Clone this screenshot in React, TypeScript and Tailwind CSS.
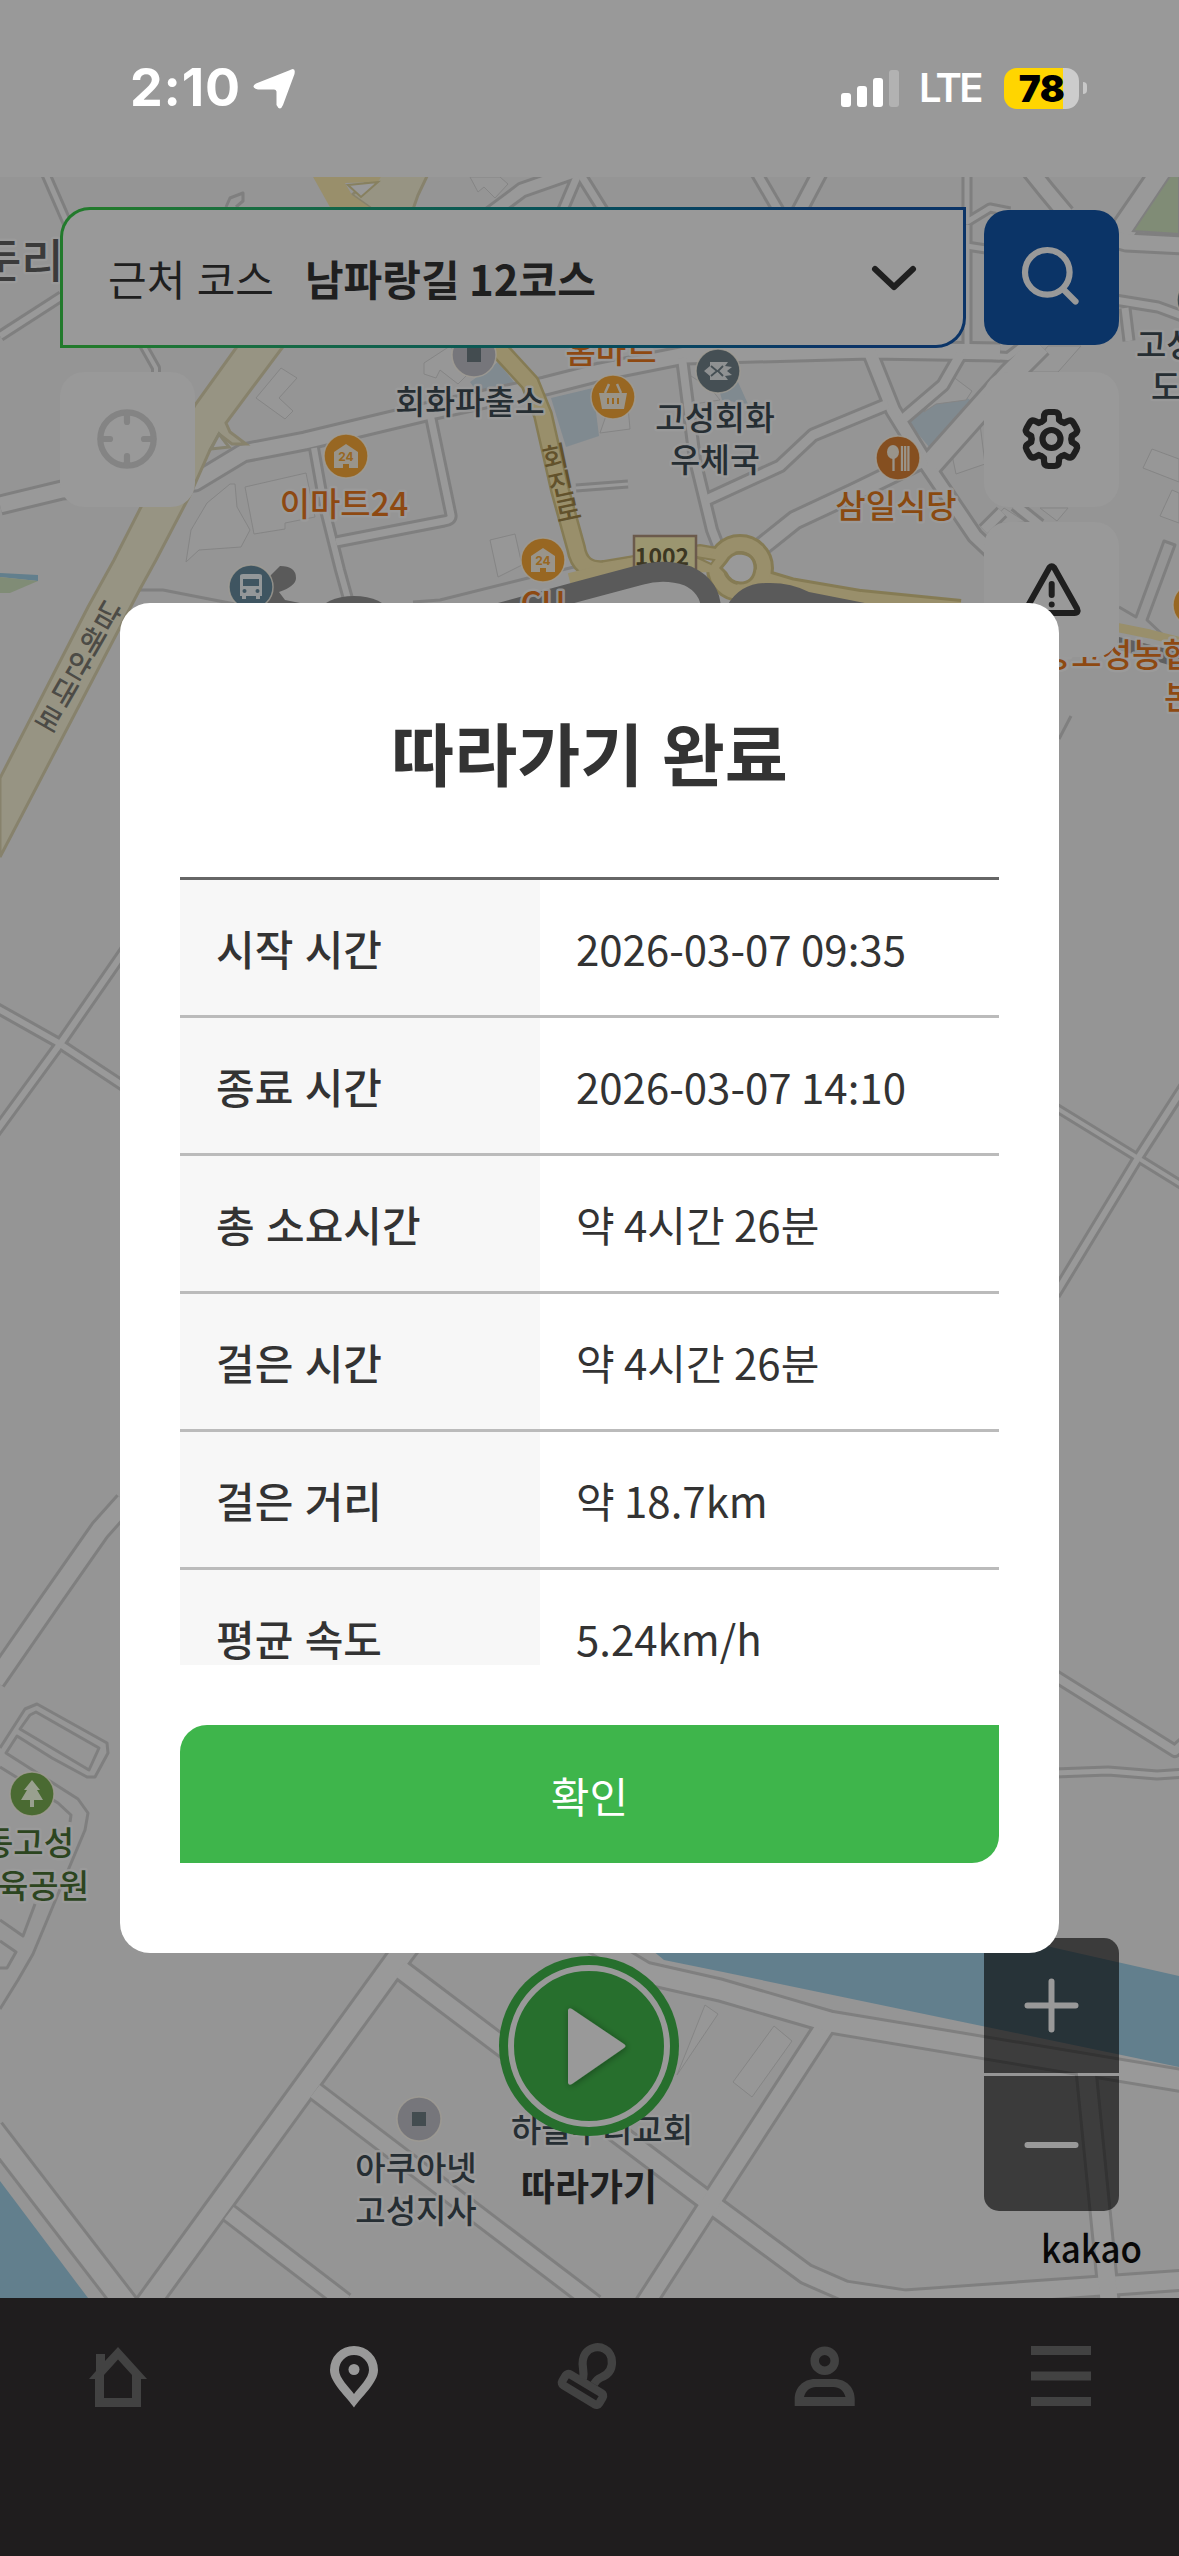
import { useState } from "react";
import type { ReactNode } from "react";

type Road = { d: string; w: number };

const summary = [
  { label: "시작 시간", value: "2026-03-07 09:35" },
  { label: "종료 시간", value: "2026-03-07 14:10" },
  { label: "총 소요시간", value: "약 4시간 26분" },
  { label: "걸은 시간", value: "약 4시간 26분" },
  { label: "걸은 거리", value: "약 18.7km" },
  { label: "평균 속도", value: "5.24km/h" },
];

const roads: Road[] = [
  { d: "M44 170L68 225", w: 8 },
  { d: "M0 336L62 296", w: 9 },
  { d: "M143 345L156 368V380", w: 7 },
  { d: "M490 214L522 190L585 168", w: 14 },
  { d: "M579 172L562 212", w: 10 },
  { d: "M579 172L604 212", w: 10 },
  { d: "M756 172L784 220", w: 11 },
  { d: "M820 172L792 225", w: 15 },
  { d: "M967 170V222L990 208L1010 212", w: 8 },
  { d: "M967 225V350", w: 8 },
  { d: "M960 245L986 249", w: 8 },
  { d: "M1030 170L1046 190L1066 214", w: 17 },
  { d: "M1166 168L1118 238", w: 26 },
  { d: "M1112 238L1126 242L1185 245", w: 18 },
  { d: "M1115 300L1158 307L1185 317", w: 10 },
  { d: "M1125 308L1129 341", w: 10 },
  { d: "M960 354L1008 357L1030 340", w: 9 },
  { d: "M1040 345L1010 375L930 465", w: 24 },
  { d: "M0 505L62 490L195 482L243 453L305 441L430 411L545 386L600 372L685 355L870 350L1000 352", w: 18 },
  { d: "M682 358L695 460L712 530L722 556", w: 11 },
  { d: "M869 350L893 410L925 462L975 536L992 552", w: 15 },
  { d: "M962 352L943 385L902 420", w: 12 },
  { d: "M888 404L813 435L780 466L706 500", w: 12 },
  { d: "M750 556L795 520L855 492L925 458", w: 18 },
  { d: "M576 488L628 484", w: 6 },
  { d: "M314 448L325 510L340 570L350 606", w: 9 },
  { d: "M430 414L451 515Q452 520 444 521L336 542", w: 10 },
  { d: "M984 530L1002 512", w: 12 },
  { d: "M1015 505L1040 525", w: 11 },
  { d: "M-5 1007L57 1042L125 1087", w: 9 },
  { d: "M125 950L60 1044L-5 1133", w: 9 },
  { d: "M125 1502L100 1530L51 1600L-5 1681", w: 20 },
  { d: "M1055 1107L1138 1158L1185 1187", w: 7 },
  { d: "M1055 1295L1138 1158L1185 1085", w: 9 },
  { d: "M1055 1676L1175 1751L1185 1742", w: 11 },
  { d: "M1055 1773L1108 1771L1157 1775L1185 1773", w: 8 },
  { d: "M-8 2130L129 2308", w: 24 },
  { d: "M146 2306L402 1953L412 1940", w: 24 },
  { d: "M229 2213L345 2302", w: 18 },
  { d: "M315 2091L595 2304", w: 18 },
  { d: "M400 1969L710 2203L806 2274L845 2291L905 2300L1185 2280", w: 20 },
  { d: "M829 2020L716 2194L645 2304", w: 20 },
  { d: "M1086 2070L1110 2310", w: 20 },
  { d: "M590 1940L645 1973L720 1990L830 2022L1190 2082", w: 22 },
];

const buildings = [
  "281,368 297,378 279,398 293,411 285,419 256,398",
  "245,487 306,473 315,517 285,523 285,529 254,534",
  "230,484 235,484 237,507 250,530 241,547 199,550 186,562 191,530 207,503",
  "490,540 515,534 522,565 498,577",
  "424,363 450,346 470,372 458,384 440,370 436,378 424,374",
  "470,177 478,192 484,187 495,198 508,184 500,177",
  "952,376 972,391 966,400 936,404 924,412",
  "980,424 952,455 956,474 985,464",
  "1152,449 1179,459 1179,482 1143,468",
  "1172,490 1179,493 1179,523 1160,516",
  "1026,372 1048,346 1081,346 1058,372",
  "990,524 1004,508 1026,522",
  "1040,508 1057,521 1068,508",
  "705,2005 718,2014 677,2075",
  "774,2026 792,2041 752,2097 733,2082",
  "688,374 712,390 720,400 694,404",
  "608,410 628,407 630,429 600,433",
];

function MapText({ x, y, color = "#262e33", anchor = "middle", size = 33, rotate = 0, children }: { x: number; y: number; color?: string; anchor?: "start" | "middle" | "end"; size?: number; rotate?: number; children: ReactNode }) {
  return (
    <text
      x={x}
      y={y}
      fill={color}
      fontSize={size}
      textAnchor={anchor}
      transform={rotate ? `rotate(${rotate} ${x} ${y})` : undefined}
      className="font-medium [paint-order:stroke]"
      stroke="#9b9b9b"
      strokeOpacity={rotate ? 0 : 0.85}
      strokeWidth={5}
      strokeLinejoin="round"
    >
      {children}
    </text>
  );
}

function Pin({ x, y, color, children }: { x: number; y: number; color: string; children?: ReactNode }) {
  return (
    <g transform={`translate(${x} ${y})`}>
      <circle r="22" fill={color} stroke="#a09c94" strokeOpacity="0.8" strokeWidth="1.5" />
      {children}
    </g>
  );
}

function Store24() {
  return (
    <>
      <path d="M0 -12L12 -4V12H3V8H-3V12H-12V-4Z" fill="#99948a" />
      <text y="4.5" textAnchor="middle" fontSize="12" fill="#986722" className="font-[Inter] font-bold">24</text>
    </>
  );
}

function CourseMap() {
  return (
    <svg className="absolute inset-0 h-full w-full" viewBox="0 177 1179 2121">
      <rect y="177" width="1179" height="2121" fill="#959595" />
      {/* water and green areas */}
      <path d="M0 2181L88 2298H0Z" fill="#627f8d" />
      <path d="M640 1940H1020L1179 1976V2067L723 1972L664 1960Z" fill="#627f8d" />
      <path d="M0 573L38 575V581L0 577Z" fill="#627f8d" />
      <path d="M0 577L38 581L10 593H0Z" fill="#808c76" />
      <path d="M470 382L498 362L522 392L478 393ZM551 398L593 388L599 436L566 447ZM949 387L975 403L939 448H930L908 422L924 407ZM716 378L738 382L748 404L722 400Z" fill="#808a90" />

      {buildings.map((p) => (
        <polygon key={p} points={p} fill="#979797" stroke="#858585" strokeWidth="1" />
      ))}

      <g fill="none" stroke="#7f7f7f" strokeLinejoin="round">
        {roads.map((r) => (
          <path key={r.d} d={r.d} strokeWidth={r.w + 3} />
        ))}
      </g>
      <g fill="none" stroke="#999999" strokeLinejoin="round">
        {roads.map((r) => (
          <path key={r.d} d={r.d} strokeWidth={r.w - 3} />
        ))}
      </g>
      <path d="M1179 170V234L1133 231L1174 170Z" fill="#808c76" stroke="#7f7f7f" strokeWidth="2" />

      <g fill="none" stroke="#7f7f7f" strokeWidth="3" strokeLinejoin="round">
        <path d="M0 1748L25 1709L37 1704L107 1743L108 1753L95 1777H87L52 1758L17 1736L6 1753L78 1799L88 1813L85 1830L53 1906L33 1954L18 1980L0 2009" fill="#999999" fillOpacity="0.4" />
        <path d="M20 1729L30 1715L36 1712L99 1748L89 1770Z" fill="#959595" />
        <path d="M0 1767L58 1803L71 1815L70 1822M35 1904L23 1936L0 1920M0 1941L16 1952L7 1968H0" />
        <path d="M1119 607L1136 617L1164 541L1175 545L1147 620L1163 635" />
        <path d="M138 590H163L214 600L235 604M413 602L440 600L528 578L574 567" />
        <path d="M1059 739L1071 716M226 207L230 198L243 193V201L236 207" />
      </g>

      {/* national road */}
      <path d="M380 170H430L418 195L411 215L282 348L226 423L230 432L246 444H232L219 434L210 450L190 495L156 560L140 589L0 857V778L88 607L114 560L141 507L195 405L236 348L369 207L352 195Z" fill="#979483" stroke="#87826c" strokeWidth="3" />
      <path d="M219 434L229 447L211 449Z" fill="#999999" stroke="#85826f" strokeWidth="3" />
      <path d="M312 175H382L378 182L345 183L352 195L372 209H331Z" fill="#998f6b" />
      <path d="M348 185L378 182L361 197Z" fill="#999999" stroke="#87805f" strokeWidth="2" />

      {/* local road 1002 and the roundabout */}
      <g fill="none" strokeLinejoin="round">
        <path d="M495 345L530 383L543 415L560 490L576 548Q580 572 604 570L700 554L735 560" stroke="#857b54" strokeWidth="20" />
        <path d="M740 575L790 590L860 602L960 612" stroke="#857b54" strokeWidth="26" />
        <circle cx="740" cy="568" r="24" stroke="#857b54" strokeWidth="20" />
        <path d="M495 345L530 383L543 415L560 490L576 548Q580 572 604 570L700 554L735 560" stroke="#998f6b" strokeWidth="15" />
        <path d="M570 582L640 565L715 563" stroke="#998f6b" strokeWidth="18" />
        <path d="M740 575L790 590L860 602L960 612" stroke="#998f6b" strokeWidth="20" />
        <circle cx="740" cy="568" r="24" stroke="#998f6b" strokeWidth="14" />
        <path d="M1115 627L1150 634L1185 643" stroke="#998f6b" strokeWidth="9" />
      </g>
      <path d="M721 568L726 562Q731 553 740 553Q755 554 755 568Q754 583 740 583Q730 582 726 573Z" fill="#999999" stroke="#857b54" strokeWidth="3" />
      <path d="M696 557L714 560L711 564Z" fill="#999999" stroke="#857b54" strokeWidth="2" />

      <rect x="634" y="536" width="62" height="40" fill="#9b9670" stroke="#6b5a4c" strokeWidth="2.5" />
      <text x="662" y="565" textAnchor="middle" fontSize="23" fill="#3c3722" className="font-bold">1002</text>

      {/* recorded track */}
      <path d="M470 621L580 591L640 575Q665 568 688 576Q711 587 711 610" fill="none" stroke="#5a5a5a" strokeWidth="20" />
      <path d="M727 606Q740 583 766 583Q790 582 809 592L880 606Z" fill="#5a5a5a" />
      <path d="M262 584L280 566Q296 566 296 578Q296 586 279 592L285 600L305 604H262Z" fill="#5a5a5a" />
      <ellipse cx="354" cy="612" rx="34" ry="16" fill="#5a5a5a" />
      <path d="M1119 637L1179 652V668L1119 650Z" fill="#5f5f5f" />

      <MapText x={-21} y={277} anchor="start" size={46} color="#3b3b3b">둔리</MapText>
      <MapText x={102} y={624} size={28} rotate={30} color="#4c4b46">남</MapText>
      <MapText x={87} y={650} size={28} rotate={30} color="#4c4b46">해</MapText>
      <MapText x={73} y={675} size={28} rotate={30} color="#4c4b46">안</MapText>
      <MapText x={59} y={701} size={28} rotate={30} color="#4c4b46">대</MapText>
      <MapText x={44} y={728} size={28} rotate={30} color="#4c4b46">로</MapText>
      <MapText x={557} y={467} size={28} rotate={-12} color="#62522c">회</MapText>
      <MapText x={563} y={494} size={28} rotate={-12} color="#62522c">진</MapText>
      <MapText x={570} y={520} size={28} rotate={-12} color="#62522c">로</MapText>

      <Pin x={474} y={355} color="#76767b"><rect x="-7" y="-7" width="14" height="14" fill="#434c50" /></Pin>
      <MapText x={470} y={414} size={32.5}>회화파출소</MapText>
      <Pin x={346} y={456} color="#986722"><Store24 /></Pin>
      <MapText x={344} y={516} color="#8e4912">이마트24</MapText>
      <Pin x={543} y={560} color="#986722"><Store24 /></Pin>
      <MapText x={543} y={615} color="#8e4912">CU</MapText>
      <MapText x={611} y={363} color="#8e4912">홈마트</MapText>
      <Pin x={613} y={397} color="#986722">
        <path d="M-14 -4H14L11 12H-11Z" fill="#99948a" />
        <path d="M-8 -4L-4 -13M8 -4L4 -13" stroke="#99948a" strokeWidth="2.5" />
        <path d="M-5 1V7M0 1V7M5 1V7" stroke="#986722" strokeWidth="2" />
      </Pin>
      <Pin x={718} y={371} color="#454f54">
        <path d="M-14 0L-8 -5V-9H10L7 -5L14 -4L9 0L14 4L7 5L10 9H-8V5Z" fill="#8f9192" />
        <path d="M-7 -5L-1 0L-7 5M5 -5L0 0L5 5" fill="none" stroke="#454f54" strokeWidth="1.8" />
      </Pin>
      <MapText x={715} y={430} size={32.5}>고성회화</MapText>
      <MapText x={715} y={472} size={32.5}>우체국</MapText>
      <Pin x={898} y={458} color="#854f20">
        <ellipse cx="-5" cy="-6" rx="6" ry="7" fill="#99948a" />
        <path d="M-4.5 -2V13M4 -12V13M7.2 -12V13M10.4 -12V13" stroke="#99948a" strokeWidth="2.3" />
      </Pin>
      <MapText x={896} y={518} color="#8a4a10">삼일식당</MapText>
      <Pin x={251} y={587} color="#3f5561">
        <path d="M-11 -11Q-11 -13 -8 -13H8Q11 -13 11 -11V9H9V12H5V9H-5V12H-9V9H-11Z" fill="#939799" />
        <path d="M-8 -8H8V-1H-8Z" fill="#3f5561" />
        <circle cx="-6.5" cy="4" r="2" fill="#3f5561" />
        <circle cx="6.5" cy="4" r="2" fill="#3f5561" />
      </Pin>
      <Pin x={1199} y={300} color="#454f54" />
      <Pin x={1195} y={605} color="#986722" />
      <MapText x={1136} y={357} anchor="start">고성</MapText>
      <MapText x={1151} y={399} anchor="start">도</MapText>
      <MapText x={1041} y={667} anchor="start" color="#8e4912">동고성농협</MapText>
      <MapText x={1164} y={709} anchor="start" color="#8e4912">본점</MapText>

      <Pin x={32} y={1794} color="#4a6a32">
        <path d="M0 -14L8 -4H5L11 6H2V13H-2V6H-11L-5 -4H-8Z" fill="#99a08f" />
      </Pin>
      <MapText x={74} y={1855} anchor="end" color="#2c451f">동고성</MapText>
      <MapText x={89} y={1898} anchor="end" color="#2c451f">체육공원</MapText>
      <Pin x={419} y={2119} color="#76767b"><rect x="-7" y="-7" width="14" height="14" fill="#434c50" /></Pin>
      <MapText x={416} y={2180}>아쿠아넷</MapText>
      <MapText x={416} y={2223}>고성지사</MapText>
      <MapText x={602} y={2142}>하늘우리교회</MapText>
      <text x="1041" y="2263" fontSize="38" textLength="101" lengthAdjust="spacingAndGlyphs" fill="#080808" className="font-['Noto_Sans_CJK_KR','Noto_Sans',sans-serif] font-medium">kakao</text>
    </svg>
  );
}

function StatusBar() {
  return (
    <header className="flex h-[177px] shrink-0 items-start justify-between bg-[#999999] pr-[92px] pl-[130px] pt-[66px] text-white">
      <div className="flex h-11 items-center gap-[11px]">
        <span className="font-[Inter] text-[52px] leading-none font-bold tracking-[0.8px]">2:10</span>
        <svg width="44" height="44" viewBox="0 0 44 44" fill="white">
          <path d="M37 4.500Q44 0 42.500 8L31 39Q28 46 24.500 39V25.500Q24 23.500 22 23.500H6Q-2 21.500 4 17.500Z" />
        </svg>
      </div>
      <div className="flex h-11 items-center">
        <svg width="58" height="38" viewBox="0 0 58 38" fill="white">
          <rect y="24" width="10" height="14" rx="3" />
          <rect x="16" y="17" width="10" height="21" rx="3" />
          <rect x="32" y="9" width="10" height="29" rx="3" />
          <rect x="48" y="1" width="10" height="37" rx="3" opacity="0.25" />
        </svg>
        <span className="ml-[20px] w-[66px] font-[Inter] text-[40px] leading-none font-semibold tracking-[-2.5px]">LTE</span>
        <div className="ml-[19px] flex h-[41px] w-[75px] items-center justify-center rounded-[13px] bg-linear-to-r from-[#ffd500] from-79% to-[#cccccc] to-79%">
          <span className="font-[Inter] text-[37px] leading-none font-black tracking-[-0.5px] text-black">78</span>
        </div>
        <div className="ml-1 h-3 w-1 rounded-r-full bg-[#c8c8c8]" />
      </div>
    </header>
  );
}

function GearIcon() {
  return (
    <svg width="135" height="135" viewBox="-67.500 -67 135 135" fill="none" stroke="#1f1f1f" strokeWidth="6.200" strokeLinecap="round" strokeLinejoin="round">
      {[0, 60, 120, 180, 240, 300].map((a) => (
        <path key={a} transform={`rotate(${a})`} d="M-10 -17.300L-7.500 -19V-22Q-7.500 -27 -3 -27H3Q7.500 -27 7.500 -22V-19L10 -17.300" />
      ))}
      <circle r="9" />
    </svg>
  );
}

function MapControls() {
  return (
    <div className="relative px-[60px] pt-[30px]">
      <div className="flex items-center gap-[18px]">
        <div className="h-[141px] w-[906px] rounded-tl-[30px] rounded-br-[30px] bg-linear-to-r from-[#227a2c] from-5% to-[#0b3467] to-85% p-[3px]">
          <button className="flex h-full w-full items-center rounded-tl-[27px] rounded-br-[27px] bg-[#999999] pr-[44px] pl-[45px] text-[42px] text-[#1f1f1f]">
            <span className="[word-spacing:2px]">근처 코스</span>
            <span className="ml-[31px] font-bold">남파랑길 12코스</span>
            <svg className="ml-auto" width="50" height="30" viewBox="0 0 50 30" fill="none" stroke="#1f1f1f" strokeWidth="6" strokeLinecap="round" strokeLinejoin="round">
              <path d="M6 6L25 24L44 6" />
            </svg>
          </button>
        </div>
        <button className="size-[135px] rounded-[24px] bg-[#0b3467]">
          <svg width="135" height="135" viewBox="0 0 135 135" fill="none" stroke="#999999" strokeWidth="6.200" strokeLinecap="round">
            <circle cx="63.300" cy="62.300" r="22.300" />
            <path d="M79 79L91.500 91.500" />
          </svg>
        </button>
      </div>
      <div className="mt-6 flex items-start justify-between">
        <button className="size-[135px] rounded-[24px] bg-[#999999]">
          <svg width="135" height="135" viewBox="0 0 135 135" fill="none" stroke="#848484" strokeWidth="6.200" strokeLinecap="round">
            <circle cx="67" cy="67" r="26.700" />
            <path d="M67 41V50M67 84V93M41 67H50M84 67H93" />
          </svg>
        </button>
        <div className="flex flex-col gap-[15px]">
          <button className="size-[135px] rounded-[24px] bg-[#999999]">
            <GearIcon />
          </button>
          <button className="size-[135px] rounded-[24px] bg-[#999999]">
            <svg width="135" height="135" viewBox="0 0 135 135" fill="none" stroke="#1f1f1f" strokeWidth="6" strokeLinecap="round" strokeLinejoin="round">
              <path d="M65.500 45.500Q67.700 43 70 45.500L93 86.500Q95 91 90.500 91H45Q40.500 91 42.500 86.500Z" />
              <path d="M67.700 62V73M67.700 82.500V82.600" />
            </svg>
          </button>
        </div>
      </div>
    </div>
  );
}

function FollowButton() {
  return (
    <div className="flex flex-col items-center">
      <svg width="180" height="180" viewBox="-90 -90 180 180">
        <defs>
          <filter id="soft" x="-50%" y="-50%" width="200%" height="200%">
            <feDropShadow dx="1" dy="1" stdDeviation="3.5" floodOpacity="0.35" />
          </filter>
        </defs>
        <circle r="90" fill="#276f2d" />
        <circle r="78" fill="none" stroke="#999999" strokeWidth="6" />
        <path d="M-21 -36Q-20 -39 -17 -37L35 -2Q38 0 35 2L-17 38Q-20 40 -21 37Z" fill="#999999" filter="url(#soft)" />
      </svg>
      <span className="mt-[23px] text-[37px] leading-[52px] font-bold text-[#1f1f1f]">따라가기</span>
    </div>
  );
}

function ZoomControl() {
  return (
    <div className="flex w-[135px] flex-col gap-[3px] overflow-hidden rounded-[15px]">
      <button className="h-[135px] bg-black/60">
        <svg width="135" height="135" viewBox="0 0 135 135" stroke="#999999" strokeWidth="6" strokeLinecap="round">
          <path d="M43.500 67.500H91.500M67.500 43.500V91.500" />
        </svg>
      </button>
      <button className="h-[135px] bg-black/60">
        <svg width="135" height="135" viewBox="0 0 135 135" stroke="#999999" strokeWidth="6" strokeLinecap="round">
          <path d="M43.500 69H91.500" />
        </svg>
      </button>
    </div>
  );
}

function TabBar() {
  const tabs = [
    {
      name: "home",
      icon: <path fillRule="evenodd" d="M36 7L65 39H59V67H13V39H7L14 31V14H23V21ZM36 19.500L22 35V58H50V35Z" />,
    },
    {
      name: "map",
      icon: (
        <>
          <path fillRule="evenodd" d="M36 67.500C29 57 12 43 12 30A24 24 0 0 1 60 30C60 43 43 57 36 67.500ZM36 54C41 47 51 38 51 30A15 15 0 0 0 21 30C21 38 31 47 36 54Z" />
          <circle cx="36" cy="29.500" r="5.500" />
        </>
      ),
    },
    {
      name: "stamp",
      icon: (
        <g fill="none" stroke="currentColor" strokeWidth="8.200">
          <rect x="-21.500" y="-6.500" width="43" height="13" rx="3" transform="translate(29.500 49.300) rotate(31)" />
          <path d="M30 39Q31 34 30 28C26 4 54 1 58.500 18C61 32 52 36 48 37.500Q44 39 41 44" />
        </g>
      ),
    },
    {
      name: "profile",
      icon: (
        <>
          <circle cx="35.700" cy="20.700" r="10" fill="none" stroke="currentColor" strokeWidth="8.500" />
          <path fillRule="evenodd" d="M5.700 66V59C5.700 48 14 39 26 39H45.500C57.500 39 65.700 48 65.700 59V66ZM15 57H56.500C55 50.500 50 47 44.500 47H27C21.500 47 16.500 50.500 15 57Z" />
        </>
      ),
    },
    {
      name: "menu",
      icon: <path d="M6 6H66V15H6ZM6 31.500H66V40.500H6ZM6 57H66V66H6Z" />,
    },
  ];

  return (
    <nav className="flex h-[258px] shrink-0 bg-[#1f1d1e] pt-[42px]">
      {tabs.map((tab) => (
        <button key={tab.name} className={`flex flex-1 items-start justify-center ${tab.name === "map" ? "text-[#999999]" : "text-[#424242]"}`}>
          <svg width="72" height="72" viewBox="0 0 72 72" fill="currentColor">
            {tab.icon}
          </svg>
        </button>
      ))}
    </nav>
  );
}

function FinishModal({ onClose }: { onClose: () => void }) {
  return (
    <div className="absolute inset-0 flex items-center justify-center">
      <div className="flex h-[1350px] w-[939px] flex-col rounded-[30px] bg-white px-[60px] pb-[90px] text-[#333333]">
        <h2 className="pt-[99px] text-center text-[68.5px] leading-[100px] font-bold [word-spacing:3px]">따라가기 완료</h2>
        <div className="mt-[75px] h-[788px] overflow-hidden border-t-3 border-[#666666]">
          {summary.map((row) => (
            <div key={row.label} className="flex h-[138px] border-b-3 border-[#bbbbbb] text-[42px]">
              <div className="flex w-[360px] items-center bg-[#f7f7f7] pl-9 font-medium [word-spacing:2px]">{row.label}</div>
              <div className="flex flex-1 items-center pl-9">{row.value}</div>
            </div>
          ))}
        </div>
        <button onClick={onClose} className="mt-[60px] h-[138px] rounded-tl-[27px] rounded-br-[27px] bg-[#3eb54b] text-[42px] text-white">
          확인
        </button>
      </div>
    </div>
  );
}

export default function App() {
  const [open, setOpen] = useState(true);

  return (
    <div className="relative flex h-[2556px] w-[1179px] flex-col overflow-hidden bg-[#999999] font-['Noto_Sans_CJK_KR',sans-serif]">
      <StatusBar />
      <main className="relative flex flex-1 flex-col justify-between overflow-hidden">
        <CourseMap />
        <MapControls />
        <div className="relative grid grid-cols-3 items-start px-[60px] pb-[87px]">
          <div className="col-start-2 -ml-px flex justify-center pt-[18px]">
            <FollowButton />
          </div>
          <div className="flex justify-end">
            <ZoomControl />
          </div>
        </div>
      </main>
      <TabBar />
      {open && <FinishModal onClose={() => setOpen(false)} />}
    </div>
  );
}
